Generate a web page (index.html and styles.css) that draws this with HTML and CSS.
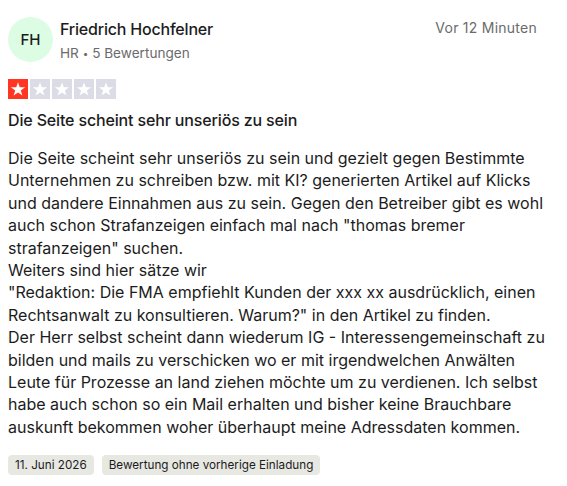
FILE: index.html
```html
<!DOCTYPE html>
<html lang="de">
<head>
<meta charset="utf-8">
<title>Bewertung</title>
<link rel="stylesheet" href="styles.css">
</head>
<body>
<article class="review">
  <header class="review-head">
    <div class="avatar">FH</div>
    <div class="author">
      <div class="author-name">Friedrich Hochfelner</div>
      <div class="author-meta">HR <span class="dot">•</span> 5 Bewertungen</div>
    </div>
    <time class="posted">Vor 12 Minuten</time>
  </header>

  <div class="stars" aria-label="1 von 5 Sternen">
    <span class="star on"><svg viewBox="0 0 20 20"><path d="M10 3.2l1.75 5.15h5.35l-4.35 3.1 1.7 5.15L10 13.5l-4.45 3.1 1.7-5.15-4.35-3.1h5.35z"/></svg></span>
    <span class="star"><svg viewBox="0 0 20 20"><path d="M10 3.2l1.75 5.15h5.35l-4.35 3.1 1.7 5.15L10 13.5l-4.45 3.1 1.7-5.15-4.35-3.1h5.35z"/></svg></span>
    <span class="star"><svg viewBox="0 0 20 20"><path d="M10 3.2l1.75 5.15h5.35l-4.35 3.1 1.7 5.15L10 13.5l-4.45 3.1 1.7-5.15-4.35-3.1h5.35z"/></svg></span>
    <span class="star"><svg viewBox="0 0 20 20"><path d="M10 3.2l1.75 5.15h5.35l-4.35 3.1 1.7 5.15L10 13.5l-4.45 3.1 1.7-5.15-4.35-3.1h5.35z"/></svg></span>
    <span class="star"><svg viewBox="0 0 20 20"><path d="M10 3.2l1.75 5.15h5.35l-4.35 3.1 1.7 5.15L10 13.5l-4.45 3.1 1.7-5.15-4.35-3.1h5.35z"/></svg></span>
  </div>

  <h2 class="review-title">Die Seite scheint sehr unseriös zu sein</h2>

  <p class="review-text">Die Seite scheint sehr unseriös zu sein und gezielt gegen Bestimmte<br>
Unternehmen zu schreiben bzw. mit KI? generierten Artikel auf Klicks<br>
und dandere Einnahmen aus zu sein. Gegen den Betreiber gibt es wohl<br>
auch schon Strafanzeigen einfach mal nach "thomas bremer<br>
strafanzeigen" suchen.<br>
Weiters sind hier sätze wir<br>
"Redaktion: Die FMA empfiehlt Kunden der xxx xx ausdrücklich, einen<br>
Rechtsanwalt zu konsultieren. Warum?" in den Artikel zu finden.<br>
Der Herr selbst scheint dann wiederum IG - Interessengemeinschaft zu<br>
bilden und mails zu verschicken wo er mit irgendwelchen Anwälten<br>
Leute für Prozesse an land ziehen möchte um zu verdienen. Ich selbst<br>
habe auch schon so ein Mail erhalten und bisher keine Brauchbare<br>
auskunft bekommen woher überhaupt meine Adressdaten kommen.</p>

  <div class="tags">
    <span class="tag">11. Juni 2026</span>
    <span class="tag">Bewertung ohne vorherige Einladung</span>
  </div>
</article>
</body>
</html>
```

FILE: styles.css
```css
html, body {
  margin: 0;
  background: #ffffff;
}

body {
  font-family: Inter, "Noto Sans", sans-serif;
  color: #1c1c1c;
}

.review {
  padding: 12px 8px 0 8px;
}

.review-head {
  display: flex;
  align-items: flex-start;
}

.avatar {
  width: 45px;
  height: 45px;
  margin-top: 5px;
  border-radius: 50%;
  background: #dcfce4;
  color: #1c1c1c;
  display: flex;
  align-items: center;
  justify-content: center;
  font-size: 15px;
  font-weight: 500;
  flex-shrink: 0;
}

.author {
  margin-left: 7px;
  flex: 1;
}

.author-name {
  font-size: 16px;
  line-height: 22px;
  font-weight: 500;
  letter-spacing: -0.2px;
  padding-top: 6px;
}

.author-meta {
  font-size: 13.6px;
  line-height: 20px;
  color: #6b6b6b;
  margin-top: 3px;
}

.dot {
  font-size: 10px;
  vertical-align: 1px;
}

.posted {
  font-size: 14px;
  line-height: 20px;
  letter-spacing: 0.25px;
  color: #6b6b6b;
  padding-top: 6px;
  margin-right: 22px;
}

.stars {
  display: flex;
  gap: 2px;
  margin-top: 16px;
}

.star {
  width: 20px;
  height: 20px;
  background: #dcdce6;
  display: block;
}

.star.on {
  background: #ff3722;
}

.star svg {
  display: block;
  width: 20px;
  height: 20px;
  fill: #ffffff;
}

.review-title {
  font-size: 16px;
  line-height: 22px;
  font-weight: 500;
  letter-spacing: -0.15px;
  margin: 10px 0 0 0;
}

.review-text {
  font-size: 16px;
  line-height: 22.4px;
  margin: 16px 0 0 0;
}

.tags {
  display: flex;
  gap: 8px;
  margin-top: 17px;
}

.tag {
  background: #e8e8e3;
  border-radius: 4px;
  font-size: 11.7px;
  line-height: 20px;
  padding: 0 7px;
  color: #1c1c1c;
}
```
